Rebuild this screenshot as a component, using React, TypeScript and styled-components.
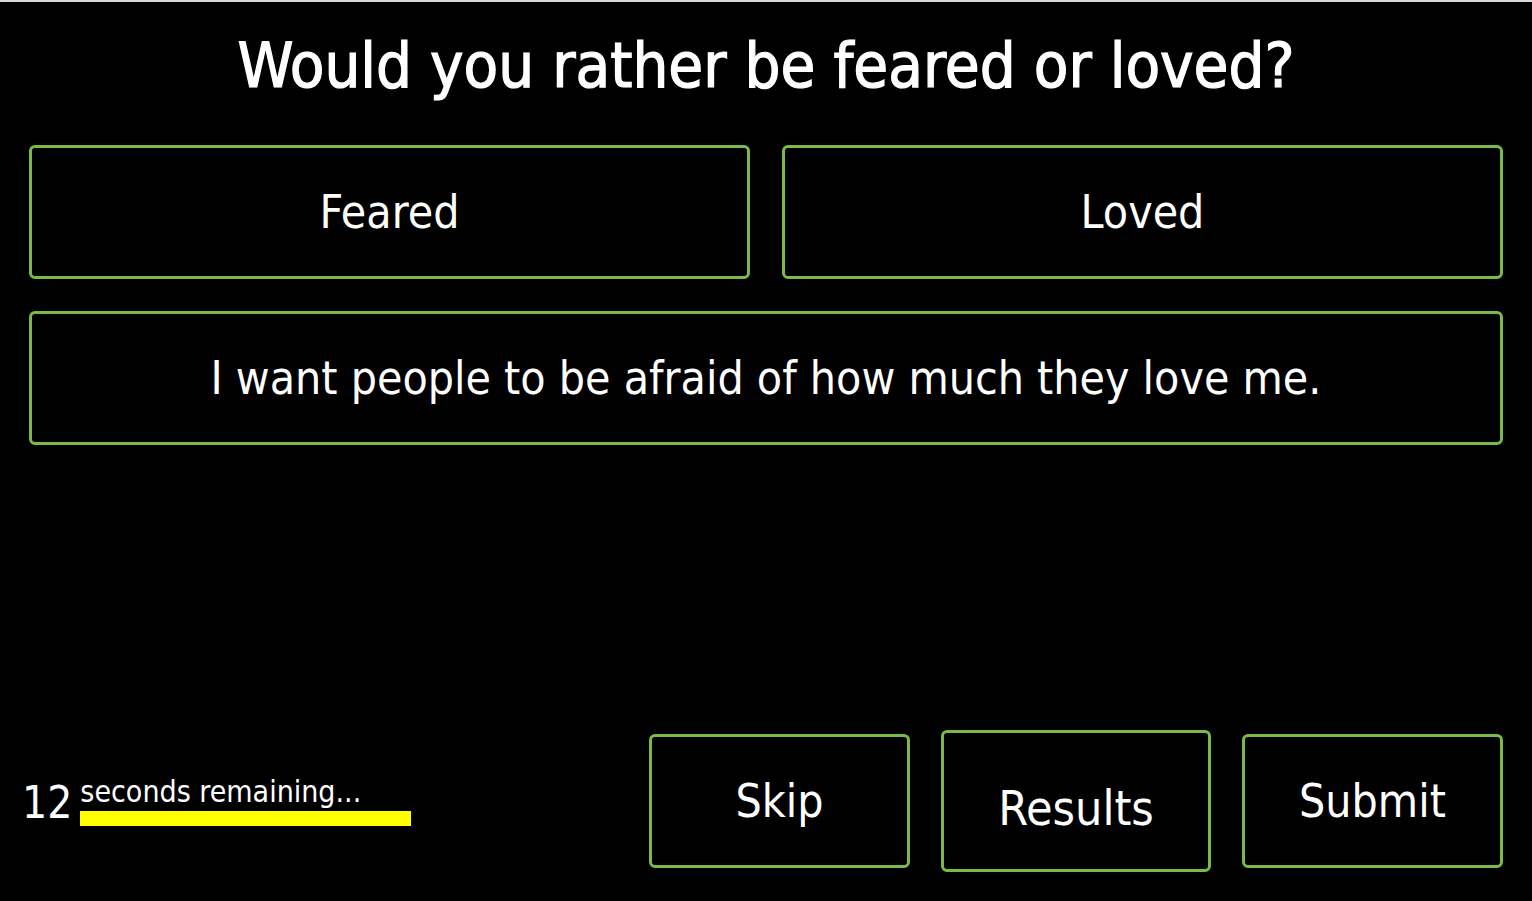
import React from 'react';
import styled, { createGlobalStyle } from 'styled-components';

const GREEN = '#7cba48';
const FONT = "'DejaVu Sans Condensed', 'Liberation Sans Narrow', 'DejaVu Sans', sans-serif";

const GlobalStyle = createGlobalStyle`
  html, body {
    margin: 0;
    padding: 0;
    background: #000;
  }
  body {
    border-top: 2px solid #d9d9d9;
    font-family: ${FONT};
    color: #fff;
  }
`;

const Page = styled.div`
  box-sizing: border-box;
  height: 899px;
  display: flex;
  flex-direction: column;
  padding: 0 29px 29px;
`;

const Question = styled.h1`
  margin: 29px 0 0;
  height: 114px;
  font-size: 63px;
  font-weight: 400;
  -webkit-text-stroke: 1.2px #fff;
  line-height: 70px;
  text-align: center;
`;

const Choices = styled.div`
  display: grid;
  grid-template-columns: 1fr 1fr;
  gap: 32px;
`;

const Choice = styled.button<{ $wide?: boolean }>`
  grid-column: ${(p) => (p.$wide ? '1 / -1' : 'auto')};
  height: 134px;
  box-sizing: border-box;
  background: #000;
  border: 3px solid ${GREEN};
  border-radius: 6px;
  color: #fff;
  font-family: ${FONT};
  font-size: 46px;
  font-weight: 400;
  cursor: pointer;
`;

const Footer = styled.div`
  margin-top: auto;
  display: flex;
  align-items: center;
  justify-content: space-between;
`;

const Timer = styled.div`
  display: flex;
  align-items: center;
  gap: 8px;
  margin-left: -7px;
`;

const Count = styled.span`
  font-size: 44px;
  line-height: 1;
  padding-top: 4px;
`;

const TimerBody = styled.div`
  display: flex;
  flex-direction: column;
`;

const TimerLabel = styled.span`
  font-size: 30px;
  line-height: 32px;
`;

const Bar = styled.div`
  margin-top: 3px;
  height: 15px;
  background: #ffff00;
`;

const Actions = styled.div`
  display: flex;
  align-items: center;
  gap: 31px;
`;

const Action = styled.button<{ $raised?: boolean }>`
  box-sizing: border-box;
  width: ${(p) => (p.$raised ? '270px' : '261px')};
  height: ${(p) => (p.$raised ? '142px' : '134px')};
  padding-top: ${(p) => (p.$raised ? '14px' : '0')};
  background: #000;
  border: 3px solid ${GREEN};
  border-radius: 6px;
  color: #fff;
  font-family: ${FONT};
  font-size: ${(p) => (p.$raised ? '48px' : '46px')};
  cursor: pointer;
`;

export default function App() {
  const seconds = 12;
  const barWidth = 331;
  return (
    <>
      <GlobalStyle />
      <Page>
        <Question>Would you rather be feared or loved?</Question>
        <Choices>
          <Choice>Feared</Choice>
          <Choice>Loved</Choice>
          <Choice $wide>I want people to be afraid of how much they love me.</Choice>
        </Choices>
        <Footer>
          <Timer>
            <Count>{seconds}</Count>
            <TimerBody>
              <TimerLabel>seconds remaining...</TimerLabel>
              <Bar style={{ width: barWidth }} />
            </TimerBody>
          </Timer>
          <Actions>
            <Action>Skip</Action>
            <Action $raised>Results</Action>
            <Action>Submit</Action>
          </Actions>
        </Footer>
      </Page>
    </>
  );
}
